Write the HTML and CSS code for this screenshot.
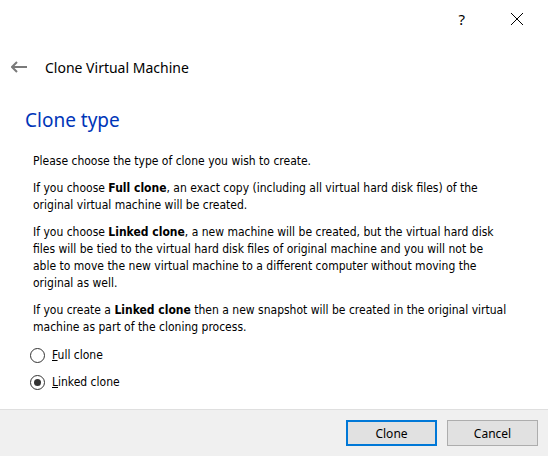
FILE: index.html
```html
<!DOCTYPE html>
<html>
<head>
<meta charset="utf-8">
<link rel="stylesheet" href="styles.css">
</head>
<body>
<div class="window">
  <div class="titlebar">
    <span class="help">?</span>
    <svg class="close" width="14" height="14" viewBox="0 0 14 14"><path d="M1 1 L13 13 M13 1 L1 13" stroke="#000" stroke-width="1" fill="none"/></svg>
  </div>
  <div class="navbar">
    <svg class="back" width="16" height="12" viewBox="0 0 16 12"><path d="M1 6 H16 M6 1 L1 6 L6 11" stroke="#7a7a7a" stroke-width="2" fill="none"/></svg>
    <span class="navtitle">Clone Virtual Machine</span>
  </div>
  <h1 class="heading">Clone type</h1>
  <div class="content">
    <p>Please choose the type of clone you wish to create.</p>
    <p>If you choose <b>Full clone</b>, an exact copy (including all virtual hard disk files) of the original virtual machine will be created.</p>
    <p>If you choose <b>Linked clone</b>, a new machine will be created, but the virtual hard disk files will be tied to the virtual hard disk files of original machine and you will not be able to move the new virtual machine to a different computer without moving the original as well.</p>
    <p>If you create a <b>Linked clone</b> then a new snapshot will be created in the original virtual machine as part of the cloning process.</p>
    <div class="radios">
      <label class="radio"><span class="circle"></span><span class="rlabel"><u>F</u>ull clone</span></label>
      <label class="radio"><span class="circle checked"></span><span class="rlabel"><u>L</u>inked clone</span></label>
    </div>
  </div>
  <div class="spacer"></div>
  <div class="footer">
    <button class="btn primary">Clone</button>
    <button class="btn">Cancel</button>
  </div>
</div>
</body>
</html>
```
FILE: styles.css
```css
html, body {
  margin: 0;
  padding: 0;
  background: #fff;
}
.window {
  width: 548px;
  height: 456px;
  display: flex;
  flex-direction: column;
  overflow: hidden;
}
.titlebar {
  height: 38px;
  display: flex;
  align-items: center;
  justify-content: flex-end;
  padding-right: 24px;
  gap: 45px;
}
.help {
  font-family: "Noto Sans", sans-serif;
  font-size: 15px;
  color: #000;
}
.close {
  display: block;
}
.navbar {
  height: 58px;
  display: flex;
  align-items: center;
  padding-left: 11px;
  gap: 18px;
}
.back {
  display: block;
}
.navtitle {
  font-family: "Noto Sans", sans-serif;
  font-size: 14px;
  color: #000;
}
.heading {
  margin: 4px 0 0 25px;
  font-family: "Noto Sans", sans-serif;
  font-weight: normal;
  font-size: 19px;
  color: #0035b8;
  height: 40px;
  line-height: 40px;
}
.content {
  padding: 13px 39px 0 33px;
  font-family: "DejaVu Sans Condensed", "DejaVu Sans", sans-serif;
  font-size: 12px;
  line-height: 17px;
  color: #000;
}
.content p {
  margin: 0 0 10px 0;
}
.radios {
  display: flex;
  flex-direction: column;
  gap: 8px;
  margin-left: -3px;
  padding-top: 0;
}
.radio {
  display: flex;
  align-items: center;
  gap: 7px;
  height: 19px;
}
.circle {
  width: 13px;
  height: 13px;
  border: 1px solid #333;
  border-radius: 50%;
  box-sizing: content-box;
  position: relative;
  background: #fff;
}
.circle.checked::after {
  content: "";
  position: absolute;
  left: 3px;
  top: 3px;
  width: 7px;
  height: 7px;
  border-radius: 50%;
  background: #333;
}
.spacer {
  flex: 1;
}
.footer {
  height: 46px;
  background: #f0f0f0;
  border-top: 1px solid #dfdfdf;
  display: flex;
  justify-content: flex-end;
  align-items: center;
  gap: 10px;
  padding-right: 10px;
}
.btn {
  width: 91px;
  height: 26px;
  background: #e1e1e1;
  border: 1px solid #adadad;
  font-family: "Noto Sans", sans-serif;
  font-size: 12px;
  color: #000;
  padding: 0;
  margin: 0;
}
.btn.primary {
  border: 2px solid #0078d7;
}
```
